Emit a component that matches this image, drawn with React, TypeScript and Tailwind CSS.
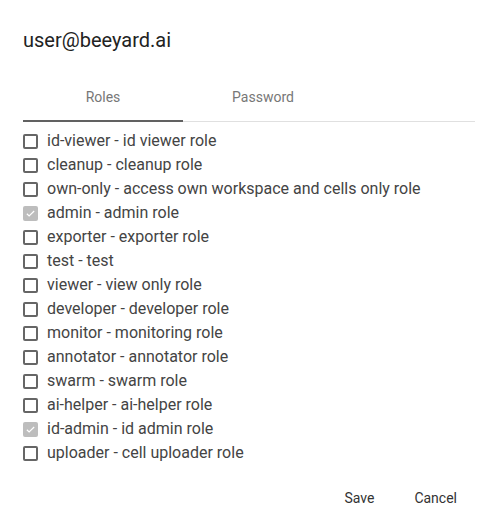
const roles = [
  { name: "id-viewer - id viewer role", checked: false },
  { name: "cleanup - cleanup role", checked: false },
  { name: "own-only - access own workspace and cells only role", checked: false },
  { name: "admin - admin role", checked: true },
  { name: "exporter - exporter role", checked: false },
  { name: "test - test", checked: false },
  { name: "viewer - view only role", checked: false },
  { name: "developer - developer role", checked: false },
  { name: "monitor - monitoring role", checked: false },
  { name: "annotator - annotator role", checked: false },
  { name: "swarm - swarm role", checked: false },
  { name: "ai-helper - ai-helper role", checked: false },
  { name: "id-admin - id admin role", checked: true },
  { name: "uploader - cell uploader role", checked: false },
]

function Checkbox({ checked }: { checked: boolean }) {
  if (checked) {
    return (
      <span className="w-[15px] h-[15px] rounded-[2px] bg-[#bdbdbd] flex items-center justify-center shrink-0">
        <svg width="11" height="11" viewBox="0 0 24 24" fill="none">
          <path d="M4 12.5l5 5L20 6.5" stroke="white" strokeWidth="2.5" />
        </svg>
      </span>
    )
  }
  return <span className="w-[15px] h-[15px] rounded-[2px] border-2 border-[#666] shrink-0" />
}

export default function App() {
  return (
    <div className="w-[496px] h-[530px] bg-white pl-[23px] pr-[21px] pt-[26px] font-['Roboto',sans-serif]">
      <h1 className="text-[20px] leading-[28px] text-[#222] font-normal">user@beeyard.ai</h1>

      <div className="mt-[20px] border-b border-[#e0e0e0] flex">
        <div className="w-[160px] h-[48px] flex items-center justify-center text-[14px] text-[#777] border-b-2 border-[#616161] -mb-px">
          Roles
        </div>
        <div className="w-[160px] h-[48px] flex items-center justify-center text-[14px] text-[#777] border-b-2 border-transparent -mb-px">
          Password
        </div>
      </div>

      <div className="mt-[7px] flex flex-col">
        {roles.map((r) => (
          <label key={r.name} className="h-[24px] flex items-center gap-[9px] text-[16px] text-[#444]">
            <Checkbox checked={r.checked} />
            <span>{r.name}</span>
          </label>
        ))}
      </div>

      <div className="mt-[15px] flex justify-end gap-[8px] pr-[2px]">
        <button className="px-[16px] h-[36px] text-[14px] text-[#333]">Save</button>
        <button className="px-[16px] h-[36px] text-[14px] text-[#333]">Cancel</button>
      </div>
    </div>
  )
}
